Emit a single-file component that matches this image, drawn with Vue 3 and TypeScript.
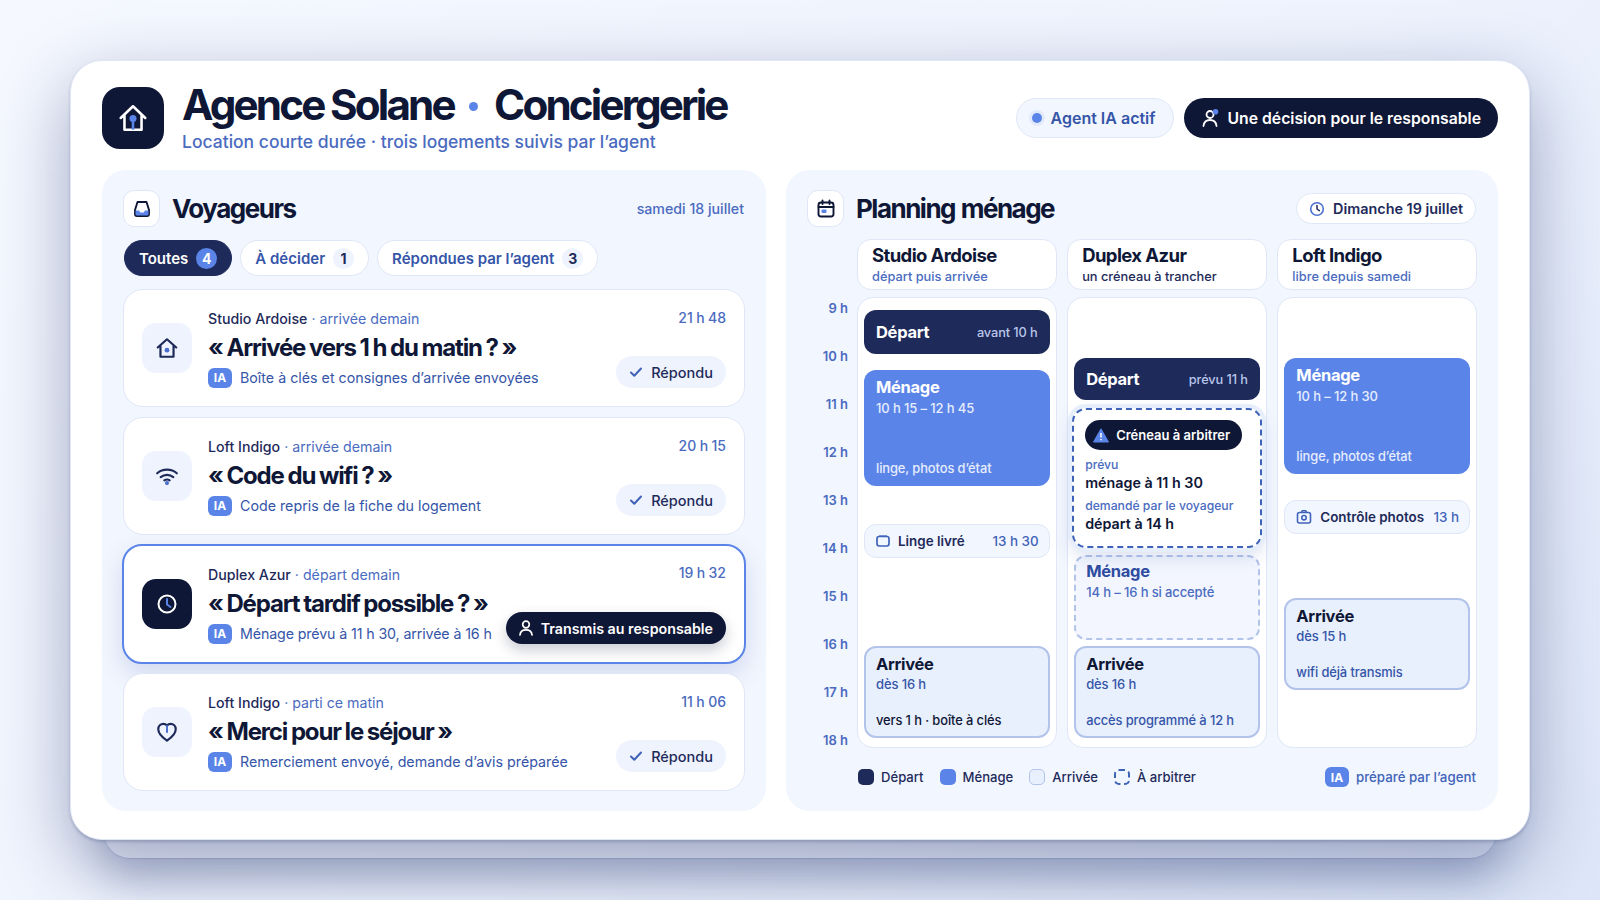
<template>
  <div class="page">
    <div class="sheet">
      <div class="under"></div>
      <main class="card">
        <header class="top">
          <div class="logo">
            <svg width="32" height="32" viewBox="0 0 30 30" fill="none">
              <path d="M3.5 15 15 4l11.500 11M7 12.500V26h16V12.500" stroke="#fff" stroke-width="2.400" stroke-linejoin="round" stroke-linecap="round" />
              <circle cx="15" cy="15.500" r="3.300" fill="#5b84e8" />
              <path d="M15 17v9" stroke="#5b84e8" stroke-width="2.400" />
            </svg>
          </div>
          <div class="brand">
            <h1>Agence Solane <i class="sep"></i> Conciergerie</h1>
            <p>Location courte durée · trois logements suivis par l’agent</p>
          </div>
          <div class="top-actions">
            <span class="status"><i class="pulse"></i>Agent IA actif</span>
            <span class="decision">
              <svg width="20" height="20" viewBox="0 0 20 20" fill="none">
                <circle cx="9" cy="6.500" r="3.500" stroke="#fff" stroke-width="1.800" />
                <path d="M2.500 18c.4-4 3-6 6.500-6s6.100 2 6.500 6" stroke="#fff" stroke-width="1.800" stroke-linecap="round" />
                <circle cx="14.500" cy="3.800" r="2.800" fill="#5b84e8" />
              </svg>
              Une décision pour le responsable
            </span>
          </div>
        </header>

        <div class="panels">
          <section class="panel inbox">
            <div class="panel-head">
              <span class="head-icon">
                <svg width="20" height="20" viewBox="0 0 20 20" fill="none">
                  <path d="M5.500 3h9l2.500 8v4a2 2 0 0 1-2 2H5a2 2 0 0 1-2-2v-4z" stroke="#0f1736" stroke-width="1.900" stroke-linejoin="round" />
                  <path d="M3.500 11.500H7l1.300 2h3.400l1.300-2h3.500V15a1.500 1.500 0 0 1-1.500 1.500H5A1.500 1.500 0 0 1 3.500 15z" fill="#5b84e8" />
                </svg>
              </span>
              <h2>Voyageurs</h2>
              <span class="head-date">samedi 18 juillet</span>
            </div>

            <div class="tabs">
              <span v-for="tab in tabs" :key="tab.label" class="tab" :class="{ on: tab.on }">
                {{ tab.label }}<b>{{ tab.count }}</b>
              </span>
            </div>

            <div class="threads">
              <article v-for="t in threads" :key="t.title" class="thread" :class="{ hot: t.hot }">
                <span class="thread-icon">
                  <svg v-if="t.icon === 'home'" width="24" height="24" viewBox="0 0 22 22" fill="none">
                    <path d="M2.500 10.500 11 3l8.500 7.500M5 9v10h12V9" stroke="#1e2a5a" stroke-width="2" stroke-linejoin="round" stroke-linecap="round" />
                    <circle cx="11" cy="13" r="2.200" fill="#4a6fd0" />
                  </svg>
                  <svg v-else-if="t.icon === 'wifi'" width="24" height="24" viewBox="0 0 22 22" fill="none">
                    <path d="M2 8.500c5-4.400 13-4.400 18 0M5.200 12c3.300-2.800 8.300-2.800 11.600 0" stroke="#1e2a5a" stroke-width="2" stroke-linecap="round" />
                    <path d="M8.500 15c1.500-1 3.500-1 5 0" stroke="#1e2a5a" stroke-width="1.800" stroke-linecap="round" />
                    <circle cx="11" cy="17.500" r="1.900" fill="#4a6fd0" />
                  </svg>
                  <svg v-else-if="t.icon === 'clock'" width="24" height="24" viewBox="0 0 24 24" fill="none">
                    <circle cx="12" cy="12" r="8.500" stroke="#fff" stroke-width="2" />
                    <path d="M12 7v5.500l3.500 2.500" stroke="#5b84e8" stroke-width="2" stroke-linecap="round" stroke-linejoin="round" />
                  </svg>
                  <svg v-else width="24" height="24" viewBox="0 0 22 22" fill="none">
                    <path d="M11 19C6 15.500 3 12.600 3 8.500 3 5.500 5.200 3.500 7.700 3.500c1.400 0 2.500.6 3.300 1.500.8-.9 1.900-1.500 3.300-1.500 2.500 0 4.700 2 4.700 5 0 4.100-3 7-8 10.500z" stroke="#1e2a5a" stroke-width="2" stroke-linejoin="round" />
                    <path d="M11 5.500V11" stroke="#4a6fd0" stroke-width="1.800" stroke-linecap="round" />
                  </svg>
                </span>
                <div class="thread-body">
                  <div class="meta"><b>{{ t.place }}</b><span> · {{ t.note }}</span></div>
                  <h3>{{ t.title }}</h3>
                  <div class="reply"><span class="ia">IA</span>{{ t.reply }}</div>
                </div>
                <div class="thread-side">
                  <span class="time">{{ t.time }}</span>
                  <span v-if="t.hot" class="sent">
                    <svg width="18" height="18" viewBox="0 0 18 18" fill="none">
                      <circle cx="9" cy="5.500" r="3.300" stroke="#fff" stroke-width="1.700" />
                      <path d="M3 16c.3-3.500 2.800-5.200 6-5.200s5.700 1.700 6 5.200" stroke="#fff" stroke-width="1.700" stroke-linecap="round" />
                    </svg>
                    Transmis au responsable
                  </span>
                  <span v-else class="done">
                    <svg width="14" height="14" viewBox="0 0 14 14" fill="none">
                      <path d="m2 7.500 3.300 3.300L12 3.500" stroke="#3f63b8" stroke-width="2" stroke-linecap="round" stroke-linejoin="round" />
                    </svg>
                    Répondu
                  </span>
                </div>
              </article>
            </div>
          </section>

          <section class="panel plan">
            <div class="panel-head">
              <span class="head-icon">
                <svg width="20" height="20" viewBox="0 0 20 20" fill="none">
                  <rect x="2.500" y="3.500" width="15" height="14" rx="2.500" stroke="#0f1736" stroke-width="1.900" />
                  <path d="M2.500 8h15M6.500 1.500v3.500M13.500 1.500v3.500" stroke="#0f1736" stroke-width="1.900" stroke-linecap="round" />
                  <rect x="5.500" y="10.500" width="5" height="3.500" rx="1" fill="#5b84e8" />
                </svg>
              </span>
              <h2>Planning ménage</h2>
              <span class="day">
                <svg width="16" height="16" viewBox="0 0 16 16" fill="none">
                  <circle cx="8" cy="8" r="6.300" stroke="#4a6fd0" stroke-width="1.600" />
                  <path d="M8 4.500V8l2.300 1.600" stroke="#1e2a5a" stroke-width="1.500" stroke-linecap="round" stroke-linejoin="round" />
                </svg>
                Dimanche 19 juillet
              </span>
            </div>

            <div class="col-heads">
              <div v-for="c in columns" :key="c.name" class="col-head">
                <strong>{{ c.name }}</strong>
                <span :class="{ dark: c.dark }">{{ c.sub }}</span>
              </div>
            </div>

            <div class="timeline">
              <div class="hours">
                <span v-for="h in hours" :key="h" class="hour" :style="{ top: (h - 9) * 48 + 'px' }">{{ h }} h</span>
              </div>

              <div class="col">
                <div class="ev depart" :style="place(12, 44)"><strong>Départ</strong><span>avant 10 h</span></div>
                <div class="ev menage" :style="place(72, 116)">
                  <strong>Ménage</strong><span>10 h 15 – 12 h 45</span><em>linge, photos d’état</em>
                </div>
                <div class="ev chip" :style="place(226, 34)">
                  <svg width="14" height="14" viewBox="0 0 14 14" fill="none">
                    <rect x="1" y="2.500" width="12" height="9.500" rx="2.200" stroke="#3f63b8" stroke-width="1.700" />
                    <path d="M3 2h8" stroke="#3f63b8" stroke-width="1.200" />
                  </svg>
                  <strong>Linge livré</strong><span>13 h 30</span>
                </div>
                <div class="ev arrivee" :style="place(348, 92)">
                  <strong>Arrivée</strong><span>dès 16 h</span><em class="ink">vers 1 h · boîte à clés</em>
                </div>
              </div>

              <div class="col">
                <div class="ev depart" :style="place(60, 42)"><strong>Départ</strong><span>prévu 11 h</span></div>
                <div class="conflict" :style="{ top: '110px', height: '140px' }">
                  <span class="flag">
                    <svg width="16" height="15" viewBox="0 0 16 15">
                      <path d="M8 .8 15.500 14H.5z" fill="#5b84e8" stroke="#5b84e8" stroke-linejoin="round" />
                      <path d="M8 5v4.500M8 11v1.300" stroke="#fff" stroke-width="1.500" />
                    </svg>
                    Créneau à arbitrer
                  </span>
                  <small class="first">prévu</small>
                  <b>ménage à 11 h 30</b>
                  <small>demandé par le voyageur</small>
                  <b>départ à 14 h</b>
                </div>
                <div class="ev maybe" :style="place(257, 85)">
                  <strong>Ménage</strong><span>14 h – 16 h si accepté</span>
                </div>
                <div class="ev arrivee" :style="place(348, 92)">
                  <strong>Arrivée</strong><span>dès 16 h</span><em>accès programmé à 12 h</em>
                </div>
              </div>

              <div class="col">
                <div class="ev menage" :style="place(60, 116)">
                  <strong>Ménage</strong><span>10 h – 12 h 30</span><em>linge, photos d’état</em>
                </div>
                <div class="ev chip" :style="place(202, 34)">
                  <svg width="16" height="16" viewBox="0 0 16 16" fill="none">
                    <rect x="1.500" y="3.500" width="13" height="10.500" rx="2" stroke="#3f63b8" stroke-width="1.600" />
                    <circle cx="8" cy="8.700" r="2.200" stroke="#3f63b8" stroke-width="1.600" />
                    <path d="M5.500 3.200 6.300 1.800h3.400l.8 1.400" stroke="#3f63b8" stroke-width="1.500" />
                  </svg>
                  <strong>Contrôle photos</strong><span>13 h</span>
                </div>
                <div class="ev arrivee" :style="place(300, 92)">
                  <strong>Arrivée</strong><span>dès 15 h</span><em>wifi déjà transmis</em>
                </div>
              </div>
            </div>

            <footer class="legend">
              <span><i class="sw s-dep"></i>Départ</span>
              <span><i class="sw s-men"></i>Ménage</span>
              <span><i class="sw s-arr"></i>Arrivée</span>
              <span><i class="sw s-arb"></i>À arbitrer</span>
              <span class="by"><span class="ia">IA</span>préparé par l’agent</span>
            </footer>
          </section>
        </div>
      </main>
    </div>
  </div>
</template>

<script setup lang="ts">
interface Thread {
  place: string
  note: string
  title: string
  reply: string
  time: string
  icon: 'home' | 'wifi' | 'clock' | 'heart'
  hot?: boolean
}

const tabs = [
  { label: 'Toutes', count: 4, on: true },
  { label: 'À décider', count: 1, on: false },
  { label: 'Répondues par l’agent', count: 3, on: false }
]

const threads: Thread[] = [
  { place: 'Studio Ardoise', note: 'arrivée demain', title: '« Arrivée vers 1 h du matin ? »', reply: 'Boîte à clés et consignes d’arrivée envoyées', time: '21 h 48', icon: 'home' },
  { place: 'Loft Indigo', note: 'arrivée demain', title: '« Code du wifi ? »', reply: 'Code repris de la fiche du logement', time: '20 h 15', icon: 'wifi' },
  { place: 'Duplex Azur', note: 'départ demain', title: '« Départ tardif possible ? »', reply: 'Ménage prévu à 11 h 30, arrivée à 16 h', time: '19 h 32', icon: 'clock', hot: true },
  { place: 'Loft Indigo', note: 'parti ce matin', title: '« Merci pour le séjour »', reply: 'Remerciement envoyé, demande d’avis préparée', time: '11 h 06', icon: 'heart' }
]

const columns = [
  { name: 'Studio Ardoise', sub: 'départ puis arrivée', dark: false },
  { name: 'Duplex Azur', sub: 'un créneau à trancher', dark: true },
  { name: 'Loft Indigo', sub: 'libre depuis samedi', dark: false }
]

const hours = [9, 10, 11, 12, 13, 14, 15, 16, 17, 18]

// position dans la colonne, en px depuis le haut de la colonne
const place = (top: number, height: number) => ({ top: top + 'px', height: height + 'px' })
</script>

<style>
html,
body {
  margin: 0;
  background: #eef2fc;
}
</style>

<style scoped>
.page {
  width: 1600px;
  height: 900px;
  box-sizing: border-box;
  padding: 60px 70px;
  overflow: hidden;
  background: linear-gradient(135deg, #f5f8ff 0%, #eef3fd 55%, #dde6f8 100%);
  font-family: Inter, "Noto Sans", sans-serif;
  color: #0f1736;
}

.sheet {
  position: relative;
  height: 780px;
}

.under {
  position: absolute;
  left: 34px;
  right: 34px;
  bottom: -18px;
  height: 120px;
  border-radius: 26px;
  background: rgba(236, 240, 250, 0.2);
  box-shadow: 0 1px 1px rgba(70, 90, 160, 0.18), 0 20px 40px rgba(40, 60, 120, 0.26);
}

.card {
  position: relative;
  box-sizing: border-box;
  height: 780px;
  padding: 26px 31px 28px;
  background: #fff;
  border: 1px solid #e1e7f5;
  border-radius: 32px;
  box-shadow: 0 2px 3px rgba(60, 75, 120, 0.28), 0 24px 70px rgba(25, 40, 100, 0.38);
}

.top {
  display: flex;
  align-items: center;
  height: 62px;
  margin-bottom: 21px;
}

.logo {
  width: 62px;
  height: 62px;
  display: flex;
  align-items: center;
  justify-content: center;
  border-radius: 18px;
  background: #0f1736;
  flex: none;
}

.brand {
  margin-left: 18px;
}

h1 {
  margin: -3px 0 0;
  display: flex;
  align-items: center;
  font-size: 42.200px;
  line-height: 48px;
  font-weight: 700;
  letter-spacing: -2.850px;
  word-spacing: -0.500px;
  white-space: pre;
}

.sep {
  width: 9px;
  height: 9px;
  border-radius: 50%;
  background: #5b84e8;
  margin: 3px 9px 0;
}

.brand p {
  margin: 2px 0 0;
  font-size: 17.500px;
  line-height: 22px;
  font-weight: 500;
  color: #4a6bc0;
}

.top-actions {
  margin-left: auto;
  display: flex;
  gap: 10px;
}

.status,
.decision {
  height: 40px;
  box-sizing: border-box;
  display: flex;
  align-items: center;
  border-radius: 20px;
  font-size: 16px;
  font-weight: 600;
  white-space: nowrap;
}

.status {
  padding: 0 17px 0 15px;
  gap: 9px;
  background: #f2f6fe;
  border: 1.500px solid #dfe7f7;
  color: #3555a8;
}

.pulse {
  width: 10px;
  height: 10px;
  border-radius: 50%;
  background: #5b84e8;
  box-shadow: 0 0 0 3px #e3eafb;
}

.decision {
  padding: 0 17px 0 17px;
  gap: 7px;
  background: #0f1736;
  color: #fff;
  font-size: 15.750px;
}

.panels {
  display: grid;
  grid-template-columns: 664px 712px;
  gap: 20px;
}

.panel {
  height: 641px;
  box-sizing: border-box;
  background: #f2f6fe;
  border-radius: 24px;
  padding: 20px 21px;
}

.panel-head {
  display: flex;
  align-items: center;
  height: 37px;
}

.head-icon {
  width: 37px;
  height: 37px;
  box-sizing: border-box;
  display: flex;
  align-items: center;
  justify-content: center;
  background: #fff;
  border: 1px solid #dfe7f7;
  border-radius: 11px;
  flex: none;
}

h2 {
  margin: 0 0 0 12px;
  font-size: 26px;
  font-weight: 700;
  letter-spacing: -1.500px;
  word-spacing: 1px;
}

.head-date {
  margin-left: auto;
  margin-right: 1px;
  font-size: 14.200px;
  font-weight: 500;
  color: #4a6bc0;
}

.tabs {
  display: flex;
  gap: 8px;
  margin: 13px 0 13px 1px;
}

.tab {
  height: 36px;
  box-sizing: border-box;
  display: flex;
  align-items: center;
  gap: 8px;
  padding: 0 14px;
  background: #fff;
  border: 1.500px solid #dfe7f7;
  border-radius: 18px;
  font-size: 15px;
  font-weight: 600;
  color: #3555a8;
}

.tab b {
  width: 21px;
  height: 21px;
  display: flex;
  align-items: center;
  justify-content: center;
  border-radius: 50%;
  background: #eef3fd;
  color: #1e2a5a;
  font-size: 14px;
  font-weight: 700;
}

.tab.on {
  background: #1e2a5a;
  border-color: #1e2a5a;
  color: #fff;
}

.tab.on b {
  background: #5b84e8;
  color: #fff;
}

.threads {
  display: flex;
  flex-direction: column;
  gap: 10px;
}

.thread {
  height: 118px;
  box-sizing: border-box;
  display: flex;
  align-items: center;
  padding: 0 18px;
  background: #fff;
  border: 1px solid #dfe7f7;
  border-radius: 20px;
}

.thread.hot {
  height: 120px;
  margin: -1px -1px -1px;
  padding: 0 18px;
  border: 2px solid #5b84e8;
  box-shadow: 0 10px 24px rgba(60, 90, 170, 0.18);
}

.thread-icon {
  width: 50px;
  height: 50px;
  display: flex;
  align-items: center;
  justify-content: center;
  border-radius: 14px;
  background: #eef3fd;
  flex: none;
}

.hot .thread-icon {
  background: #0f1736;
}

.thread-body {
  margin: 2px 0 0 16px;
  min-width: 0;
  flex: 1;
}

.meta {
  font-size: 14.200px;
  line-height: 18px;
  color: #4a6bc0;
}

.meta b {
  font-weight: 500;
  color: #1e2a5a;
}

h3 {
  margin: 3px 0 3px;
  font-size: 24px;
  line-height: 34px;
  font-weight: 700;
  letter-spacing: -1.150px;
  word-spacing: -0.800px;
  white-space: nowrap;
}

.reply {
  display: flex;
  align-items: center;
  gap: 8px;
  font-size: 14.250px;
  line-height: 20px;
  color: #3555a8;
  white-space: nowrap;
}

.hot .reply {
  letter-spacing: -0.130px;
}

.ia {
  width: 24px;
  height: 20px;
  display: inline-flex;
  align-items: center;
  justify-content: center;
  border-radius: 6px;
  background: #5b84e8;
  color: #fff;
  font-size: 12px;
  font-weight: 700;
  letter-spacing: 0;
  flex: none;
}

.thread-side {
  align-self: stretch;
  display: flex;
  flex-direction: column;
  align-items: flex-end;
  justify-content: space-between;
  padding: 19px 0 18px;
  flex: none;
}

.hot .thread-side {
  padding: 18px 0 18px;
}

.time {
  font-size: 14px;
  line-height: 17px;
  font-weight: 500;
  word-spacing: -0.300px;
  color: #4a6bc0;
}

.done,
.sent {
  height: 32px;
  display: flex;
  align-items: center;
  border-radius: 16px;
  font-size: 14.500px;
  white-space: nowrap;
}

.done {
  gap: 8px;
  padding: 0 13px 0 13px;
  background: #eef3fd;
  font-weight: 500;
  color: #1e2a5a;
}

.sent {
  gap: 6px;
  padding: 0 13px 0 11px;
  background: #0f1736;
  color: #fff;
  font-size: 14.250px;
  font-weight: 600;
  box-shadow: 0 6px 14px rgba(15, 23, 54, 0.22);
}

.day {
  margin-left: auto;
  margin-right: 1px;
  height: 31px;
  box-sizing: border-box;
  display: flex;
  align-items: center;
  gap: 8px;
  padding: 0 12px;
  background: #fff;
  border: 1.500px solid #dfe7f7;
  border-radius: 16px;
  font-size: 14.400px;
  font-weight: 600;
  color: #1e2a5a;
}

.col-heads {
  display: grid;
  grid-template-columns: repeat(3, 1fr);
  gap: 10.500px;
  margin: 12px 0 7px 50px;
}

.col-head {
  height: 51px;
  box-sizing: border-box;
  padding: 3px 13px 0 14px;
  background: #fff;
  border: 1px solid #dfe7f7;
  border-radius: 14px;
  display: flex;
  flex-direction: column;
}

.col-head strong {
  font-size: 18.500px;
  line-height: 25px;
  font-weight: 700;
  letter-spacing: -0.600px;
}

.col-head span {
  font-size: 12.800px;
  line-height: 17px;
  font-weight: 500;
  color: #4a6bc0;
}

.col-head span.dark {
  color: #1e2a5a;
}

.timeline {
  position: relative;
  display: grid;
  grid-template-columns: repeat(3, 1fr);
  gap: 10.500px;
  padding-left: 50px;
  height: 451px;
}

.hours {
  position: absolute;
  left: 0;
  top: 3px;
  width: 41px;
}

.hour {
  position: absolute;
  right: 0;
  line-height: 16px;
  font-size: 13px;
  font-weight: 600;
  color: #4a6bc0;
  white-space: nowrap;
}

.col {
  position: relative;
  background: #fff;
  border: 1px solid #dfe7f7;
  border-radius: 16px;
}

.ev {
  position: absolute;
  left: 6px;
  right: 6px;
  box-sizing: border-box;
  border-radius: 12px;
}

.ev strong,
.ev span,
.ev em {
  display: block;
  white-space: nowrap;
}

.ev em {
  position: absolute;
  left: 12px;
  bottom: 9px;
  font-style: normal;
  font-size: 12.900px;
  line-height: 17px;
  font-weight: 500;
  letter-spacing: -0.100px;
}

.ev.depart {
  display: flex;
  align-items: center;
  justify-content: space-between;
  padding: 0 12px;
  background: #1e2a5a;
  color: #fff;
}

.depart strong {
  font-size: 16.500px;
  font-weight: 700;
  letter-spacing: -0.300px;
}

.depart span {
  font-size: 12.800px;
  font-weight: 500;
  letter-spacing: -0.100px;
  color: #b9c6ea;
}

.menage,
.maybe,
.arrivee {
  padding: 6px 12px;
}

.menage strong,
.maybe strong,
.arrivee strong {
  font-size: 16.500px;
  line-height: 22px;
  font-weight: 700;
  letter-spacing: -0.300px;
}

.menage span,
.maybe span,
.arrivee span {
  margin-top: 1px;
  font-size: 13px;
  line-height: 18px;
  font-weight: 500;
  letter-spacing: -0.120px;
}

.menage {
  background: #5b84e8;
  color: #fff;
}

.menage span,
.menage em {
  color: #e6edfd;
}

.maybe {
  background: #f3f6fe;
  border: 2px dashed #b3c4ea;
  padding: 3px 10px;
}

.maybe strong {
  color: #2f4da0;
}

.maybe span {
  margin-top: 1px;
  color: #4a6bc0;
}

.arrivee {
  background: #e8effd;
  border: 2px solid #b3c4ea;
  padding: 5px 10px;
}

.arrivee strong {
  color: #0f1736;
}

.arrivee span,
.arrivee em {
  color: #3555a8;
}

.arrivee span {
  margin-top: 0;
}

.arrivee em {
  left: 10px;
  bottom: 7px;
}

.arrivee em.ink {
  color: #0f1736;
}

.ev.chip {
  display: flex;
  align-items: center;
  gap: 8px;
  padding: 0 10px 0 11px;
  background: #f2f6fe;
  border: 1.500px solid #dfe7f7;
  font-size: 13.400px;
}

.chip strong {
  font-weight: 600;
  color: #1e2a5a;
}

.chip span {
  margin-left: auto;
  font-weight: 500;
  color: #3f63b8;
}

.conflict {
  position: absolute;
  z-index: 1;
  left: 4px;
  right: 4px;
  box-sizing: border-box;
  padding: 10px 11px;
  background: #fff;
  border: 2px dashed #3f63b8;
  border-radius: 14px;
  box-shadow: 0 0 0 4px #e6edfb, 0 8px 18px rgba(60, 90, 170, 0.2);
}

.flag {
  display: inline-flex;
  align-items: center;
  gap: 7px;
  height: 30px;
  padding: 0 12px 0 8px;
  background: #0f1736;
  border-radius: 15px;
  color: #fff;
  font-size: 13px;
  font-weight: 600;
  white-space: nowrap;
  margin-bottom: 7px;
}

.conflict small {
  display: block;
  margin-top: 5px;
  font-size: 12.200px;
  line-height: 16px;
  font-weight: 500;
  color: #4a6bc0;
  white-space: nowrap;
}

.conflict small.first {
  margin-top: 0;
}

.conflict b {
  display: block;
  font-size: 14.300px;
  line-height: 20px;
  font-weight: 600;
  color: #0f1736;
}

.legend {
  display: flex;
  align-items: center;
  gap: 16px;
  margin: 17px 0 0 51px;
  height: 24px;
  font-size: 13.100px;
  font-weight: 500;
  color: #1e2a5a;
}

.legend > span {
  display: flex;
  align-items: center;
  gap: 7px;
}

.sw {
  width: 16px;
  height: 16px;
  box-sizing: border-box;
  border-radius: 5px;
}

.s-dep {
  background: #1e2a5a;
}

.s-men {
  background: #5b84e8;
}

.s-arr {
  background: #e8effd;
  border: 1.500px solid #b3c4ea;
}

.s-arb {
  border: 2px dashed #3f63b8;
}

.legend .by {
  margin-left: auto;
  margin-right: 1px;
  font-size: 13.300px;
  color: #3f63b8;
}
</style>
